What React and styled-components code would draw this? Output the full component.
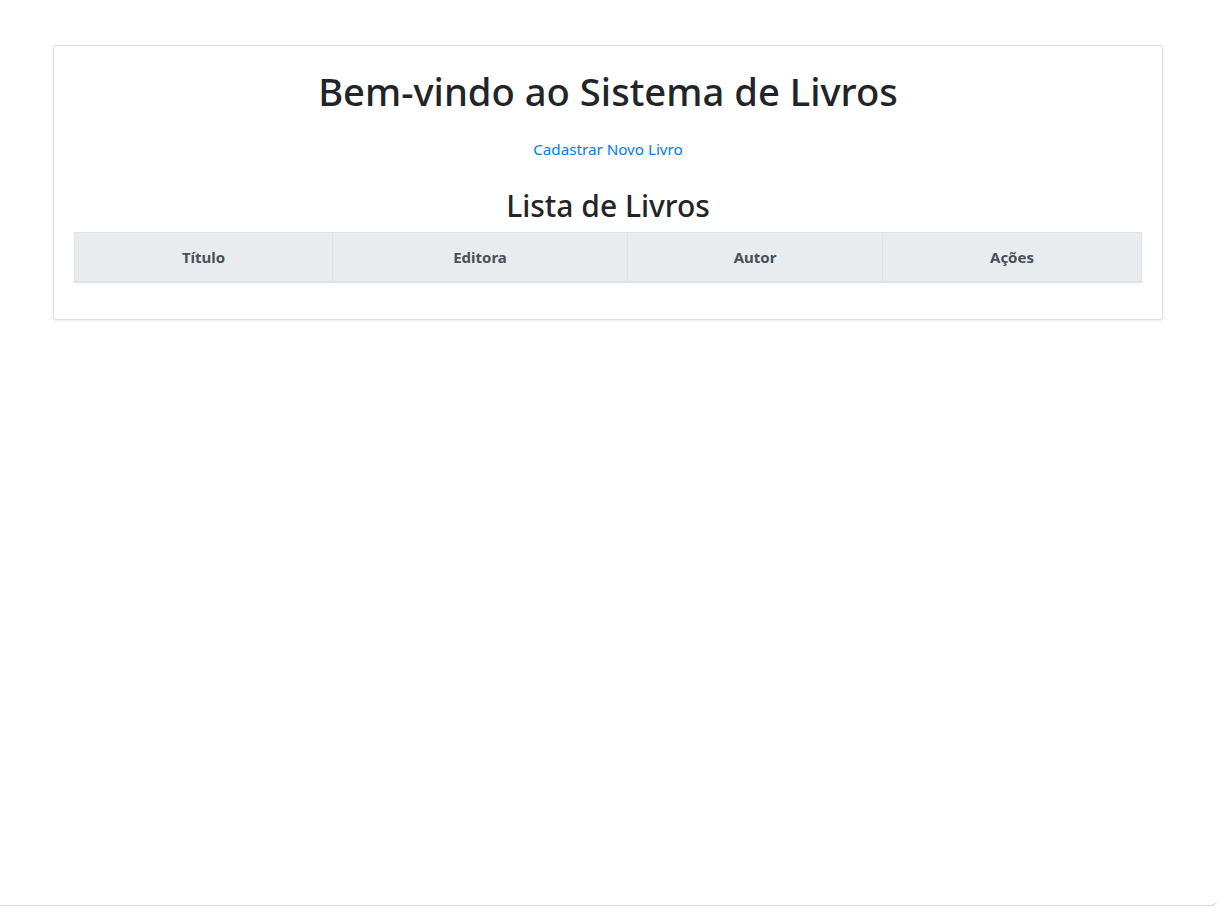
import React from "react";
import styled, { createGlobalStyle } from "styled-components";

const Global = createGlobalStyle`
  html, body { margin: 0; padding: 0; background: #ffffff; }
  body {
    font-family: "Noto Sans", "Open Sans", "Liberation Sans", sans-serif;
    color: #212529;
    font-size: 16px;
    line-height: 1.5;
  }
  * { box-sizing: border-box; }
`;

const Viewport = styled.div`
  width: 1218px;
  height: 906px;
  border-bottom: 1px solid #d6d6d6;
  border-right: 1px solid transparent;
  border-bottom-right-radius: 8px;
  box-shadow: 0 2px 2px rgba(0, 0, 0, 0.04);
  padding: 45px 1px 0 0;
`;

const Container = styled.div`
  width: 1140px;
  margin: 0 auto;
  padding: 0 15px;
`;

const Card = styled.div`
  background: #fff;
  border: 1px solid rgba(0, 0, 0, 0.125);
  border-radius: 4px;
  box-shadow: 0 1px 3px rgba(0, 0, 0, 0.08);
  padding: 20px 20px 36px;
  display: flex;
  flex-direction: column;
  align-items: center;
`;

const Title = styled.h1`
  margin: 0;
  font-size: 38.2px;
  font-weight: 500;
  line-height: 1.2;
  color: #212529;
  padding-top: 3px;
`;

const NewLink = styled.a`
  margin-top: 23px;
  font-size: 15.2px;
  color: #007bff;
  text-decoration: none;
  line-height: 22px;
`;

const Subtitle = styled.h2`
  margin: 28px 0 8px;
  font-size: 30px;
  font-weight: 500;
  line-height: 1.2;
  color: #212529;
`;

const Table = styled.table`
  width: 100%;
  border-collapse: collapse;
`;

const HeadCell = styled.th`
  background: #e9ecef;
  color: #495057;
  font-size: 15px;
  font-weight: 700;
  text-align: center;
  height: 50px;
  padding: 0 12px;
  border: 1px solid #dee2e6;
  border-bottom: 2px solid #dee2e6;
  width: ${(p) => p.$w};
`;

const columns = [
  { label: "Título", w: "258px" },
  { label: "Editora", w: "295px" },
  { label: "Autor", w: "255px" },
  { label: "Ações", w: "259px" },
];

export default function App() {
  return (
    <>
      <Global />
      <Viewport>
        <Container>
          <Card>
            <Title>Bem-vindo ao Sistema de Livros</Title>
            <NewLink href="#">Cadastrar Novo Livro</NewLink>
            <Subtitle>Lista de Livros</Subtitle>
            <Table>
              <thead>
                <tr>
                  {columns.map((c) => (
                    <HeadCell key={c.label} $w={c.w}>
                      {c.label}
                    </HeadCell>
                  ))}
                </tr>
              </thead>
              <tbody />
            </Table>
          </Card>
        </Container>
      </Viewport>
    </>
  );
}
